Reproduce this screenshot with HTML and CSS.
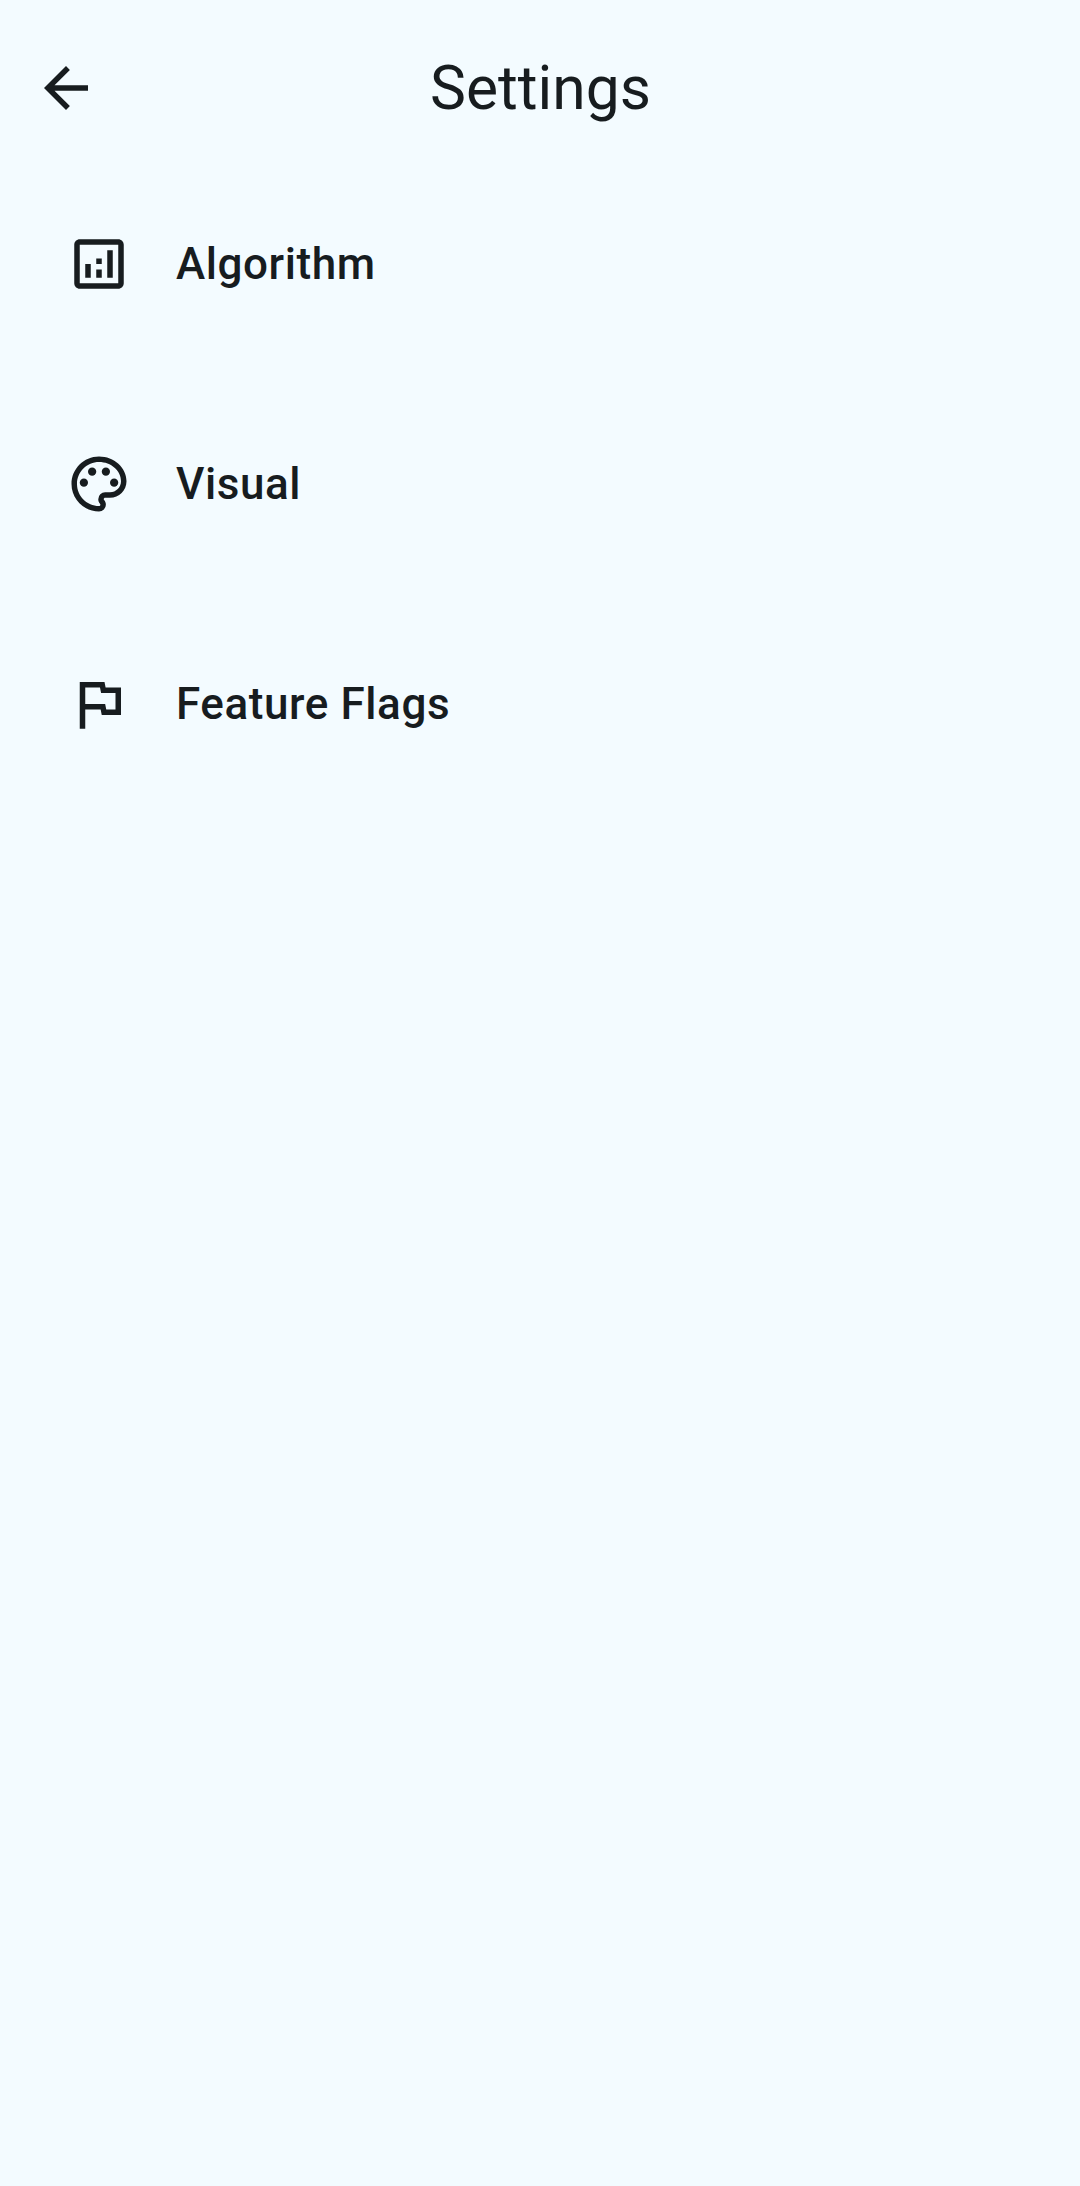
FILE: index.html
```html
<!DOCTYPE html>
<html lang="en">
<head>
<meta charset="utf-8">
<title>Settings</title>
<link rel="stylesheet" href="styles.css">
</head>
<body>
<header class="app-bar">
  <button class="back" aria-label="Back"><svg class="icon" viewBox="0 0 24 24"><path d="M20 11H7.83l5.59-5.59L12 4l-8 8 8 8 1.41-1.41L7.83 13H20v-2z"/></svg></button>
  <h1 class="title">Settings</h1>
</header>
<main class="menu">
  <a class="item"><svg class="icon" viewBox="0 0 24 24"><path d="M19 3H5c-1.1 0-2 .9-2 2v14c0 1.1.9 2 2 2h14c1.1 0 2-.9 2-2V5c0-1.1-.9-2-2-2zm0 16H5V5h14v14zM7 12h2v5H7zM15 7h2v10h-2zM11 14h2v3h-2zM11 10h2v2h-2z"/></svg><span class="label">Algorithm</span></a>
  <a class="item"><svg class="icon" viewBox="0 0 24 24"><path d="M12 22C6.49 22 2 17.51 2 12S6.49 2 12 2s10 4.04 10 9c0 3.31-2.69 6-6 6h-1.77c-.28 0-.5.22-.5.5 0 .12.05.23.13.33.41.47.64 1.06.64 1.67A2.5 2.5 0 0 1 12 22zm0-18c-4.41 0-8 3.59-8 8s3.59 8 8 8c.28 0 .5-.22.5-.5a.54.54 0 0 0-.14-.35c-.41-.46-.63-1.05-.63-1.65a2.5 2.5 0 0 1 2.5-2.5H16c2.21 0 4-1.79 4-4 0-3.86-3.59-7-8-7z"/><circle cx="6.5" cy="11.5" r="1.5"/><circle cx="9.5" cy="7.5" r="1.5"/><circle cx="14.5" cy="7.5" r="1.5"/><circle cx="17.5" cy="11.5" r="1.5"/></svg><span class="label">Visual</span></a>
  <a class="item"><svg class="icon" viewBox="0 0 24 24"><path d="M12.36 6l.4 2H18v6h-3.36l-.4-2H7V6h5.36M14 4H5v17h2v-7h5.6l.4 2h7V6h-5.6L14 4z"/></svg><span class="label">Feature Flags</span></a>
</main>
</body>
</html>
```
FILE: styles.css
```css
body {
  margin: 0;
  min-height: 100vh;
  background: #f3fbff;
  color: #171c1f;
  font-family: Roboto, "Liberation Sans", sans-serif;
}
.app-bar {
  display: grid;
  grid-template-columns: 132px 1fr 131px;
  align-items: center;
  height: 176px;
}
.back {
  display: flex;
  justify-content: center;
  padding: 0;
  border: 0;
  background: none;
  color: inherit;
}
.icon {
  display: block;
  flex: none;
  width: 66px;
  height: 66px;
  fill: currentColor;
}
.title {
  margin: 0;
  text-align: center;
  font-size: 60.5px;
  font-weight: 400;
  line-height: 77px;
}
.menu {
  display: flex;
  flex-direction: column;
  padding-top: 11px;
}
.item {
  display: flex;
  align-items: center;
  gap: 44px;
  height: 154px;
  margin-bottom: 66px;
  padding: 0 66px;
}
.label {
  font-size: 44px;
  font-weight: 500;
  letter-spacing: 0.58px;
}
```
